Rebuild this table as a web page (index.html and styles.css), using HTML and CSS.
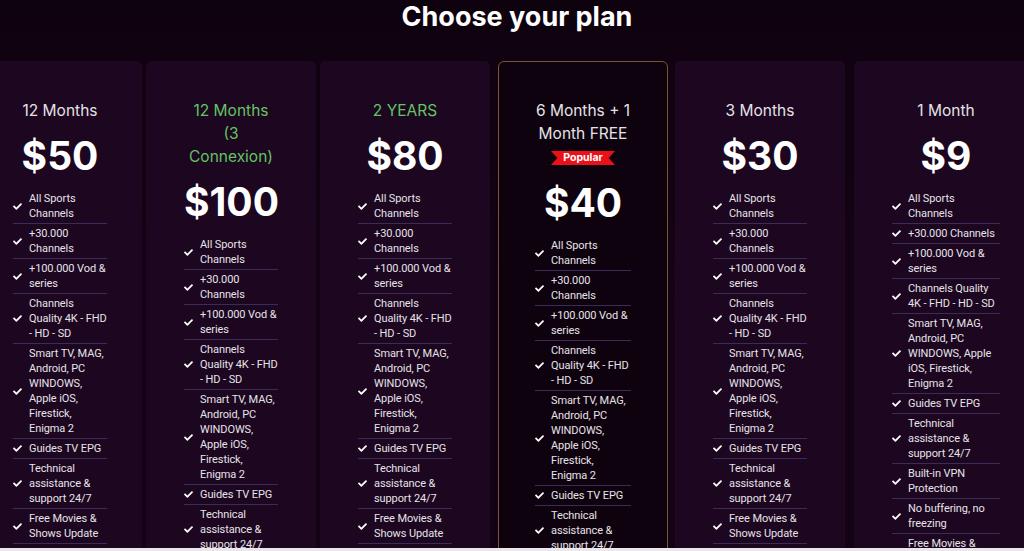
FILE: index.html
```html
<!DOCTYPE html>
<html lang="en">
<head>
<meta charset="utf-8">
<title>Choose your plan</title>
<link rel="stylesheet" href="styles.css">
</head>
<body>
<svg width="0" height="0" class="defs">
  <symbol id="chk" viewBox="0 0 512 512"><path d="M173.9 439.4l-166.4-166.4c-10-10-10-26.2 0-36.2l36.2-36.2c10-10 26.2-10 36.2 0L192 312.7 432.1 72.6c10-10 26.2-10 36.2 0l36.2 36.2c10 10 10 26.2 0 36.2l-294.4 294.4c-10 10-26.2 10-36.2 0z" fill="currentColor"/></symbol>
</svg>
<main class="page">
  <section class="pricing">
    <h1 class="title">Choose your plan</h1>
    <div class="cards">
      <article class="card card--first">
        <h2 class="plan-name">12 Months</h2>
        <div class="price">$50</div>
        <ul class="features">
          <li><svg class="chk"><use href="#chk"/></svg><span>All Sports Channels</span></li>
          <li><svg class="chk"><use href="#chk"/></svg><span>+30.000 Channels</span></li>
          <li><svg class="chk"><use href="#chk"/></svg><span>+100.000 Vod &amp; series</span></li>
          <li><svg class="chk"><use href="#chk"/></svg><span>Channels Quality 4K - FHD - HD - SD</span></li>
          <li><svg class="chk"><use href="#chk"/></svg><span>Smart TV, MAG, Android, PC WINDOWS, Apple iOS, Firestick, Enigma 2</span></li>
          <li><svg class="chk"><use href="#chk"/></svg><span>Guides TV EPG</span></li>
          <li><svg class="chk"><use href="#chk"/></svg><span>Technical assistance &amp; support 24/7</span></li>
          <li><svg class="chk"><use href="#chk"/></svg><span>Free Movies &amp; Shows Update</span></li>
        </ul>
      </article>
      <article class="card">
        <h2 class="plan-name plan-name--green">12 Months (3 Connexion)</h2>
        <div class="price">$100</div>
        <ul class="features">
          <li><svg class="chk"><use href="#chk"/></svg><span>All Sports Channels</span></li>
          <li><svg class="chk"><use href="#chk"/></svg><span>+30.000 Channels</span></li>
          <li><svg class="chk"><use href="#chk"/></svg><span>+100.000 Vod &amp; series</span></li>
          <li><svg class="chk"><use href="#chk"/></svg><span>Channels Quality 4K - FHD - HD - SD</span></li>
          <li><svg class="chk"><use href="#chk"/></svg><span>Smart TV, MAG, Android, PC WINDOWS, Apple iOS, Firestick, Enigma 2</span></li>
          <li><svg class="chk"><use href="#chk"/></svg><span>Guides TV EPG</span></li>
          <li><svg class="chk"><use href="#chk"/></svg><span>Technical assistance &amp; support 24/7</span></li>
          <li><svg class="chk"><use href="#chk"/></svg><span>Free Movies &amp; Shows Update</span></li>
        </ul>
      </article>
      <article class="card">
        <h2 class="plan-name plan-name--green">2 YEARS</h2>
        <div class="price">$80</div>
        <ul class="features">
          <li><svg class="chk"><use href="#chk"/></svg><span>All Sports Channels</span></li>
          <li><svg class="chk"><use href="#chk"/></svg><span>+30.000 Channels</span></li>
          <li><svg class="chk"><use href="#chk"/></svg><span>+100.000 Vod &amp; series</span></li>
          <li><svg class="chk"><use href="#chk"/></svg><span>Channels Quality 4K - FHD - HD - SD</span></li>
          <li><svg class="chk"><use href="#chk"/></svg><span>Smart TV, MAG, Android, PC WINDOWS, Apple iOS, Firestick, Enigma 2</span></li>
          <li><svg class="chk"><use href="#chk"/></svg><span>Guides TV EPG</span></li>
          <li><svg class="chk"><use href="#chk"/></svg><span>Technical assistance &amp; support 24/7</span></li>
          <li><svg class="chk"><use href="#chk"/></svg><span>Free Movies &amp; Shows Update</span></li>
        </ul>
      </article>
      <article class="card card--popular">
        <h2 class="plan-name">6 Months + 1 Month FREE</h2>
        <div class="ribbon">Popular</div>
        <div class="price">$40</div>
        <ul class="features">
          <li><svg class="chk"><use href="#chk"/></svg><span>All Sports Channels</span></li>
          <li><svg class="chk"><use href="#chk"/></svg><span>+30.000 Channels</span></li>
          <li><svg class="chk"><use href="#chk"/></svg><span>+100.000 Vod &amp; series</span></li>
          <li><svg class="chk"><use href="#chk"/></svg><span>Channels Quality 4K - FHD - HD - SD</span></li>
          <li><svg class="chk"><use href="#chk"/></svg><span>Smart TV, MAG, Android, PC WINDOWS, Apple iOS, Firestick, Enigma 2</span></li>
          <li><svg class="chk"><use href="#chk"/></svg><span>Guides TV EPG</span></li>
          <li><svg class="chk"><use href="#chk"/></svg><span>Technical assistance &amp; support 24/7</span></li>
          <li><svg class="chk"><use href="#chk"/></svg><span>Free Movies &amp; Shows Update</span></li>
        </ul>
      </article>
      <article class="card">
        <h2 class="plan-name">3 Months</h2>
        <div class="price">$30</div>
        <ul class="features">
          <li><svg class="chk"><use href="#chk"/></svg><span>All Sports Channels</span></li>
          <li><svg class="chk"><use href="#chk"/></svg><span>+30.000 Channels</span></li>
          <li><svg class="chk"><use href="#chk"/></svg><span>+100.000 Vod &amp; series</span></li>
          <li><svg class="chk"><use href="#chk"/></svg><span>Channels Quality 4K - FHD - HD - SD</span></li>
          <li><svg class="chk"><use href="#chk"/></svg><span>Smart TV, MAG, Android, PC WINDOWS, Apple iOS, Firestick, Enigma 2</span></li>
          <li><svg class="chk"><use href="#chk"/></svg><span>Guides TV EPG</span></li>
          <li><svg class="chk"><use href="#chk"/></svg><span>Technical assistance &amp; support 24/7</span></li>
          <li><svg class="chk"><use href="#chk"/></svg><span>Free Movies &amp; Shows Update</span></li>
        </ul>
      </article>
      <article class="card card--wide">
        <h2 class="plan-name">1 Month</h2>
        <div class="price">$9</div>
        <ul class="features">
          <li><svg class="chk"><use href="#chk"/></svg><span>All Sports Channels</span></li>
          <li><svg class="chk"><use href="#chk"/></svg><span>+30.000 Channels</span></li>
          <li><svg class="chk"><use href="#chk"/></svg><span>+100.000 Vod &amp; series</span></li>
          <li><svg class="chk"><use href="#chk"/></svg><span>Channels Quality 4K - FHD - HD - SD</span></li>
          <li><svg class="chk"><use href="#chk"/></svg><span>Smart TV, MAG, Android, PC WINDOWS, Apple iOS, Firestick, Enigma 2</span></li>
          <li><svg class="chk"><use href="#chk"/></svg><span>Guides TV EPG</span></li>
          <li><svg class="chk"><use href="#chk"/></svg><span>Technical assistance &amp; support 24/7</span></li>
          <li><svg class="chk"><use href="#chk"/></svg><span>Built-in VPN Protection</span></li>
          <li><svg class="chk"><use href="#chk"/></svg><span>No buffering, no freezing</span></li>
          <li><svg class="chk"><use href="#chk"/></svg><span>Free Movies &amp; Shows Update</span></li>
        </ul>
      </article>
    </div>
  </section>
  <div class="next-section"></div>
</main>
</body>
</html>
```
FILE: styles.css
```css
* { box-sizing: border-box; }
html, body { margin: 0; padding: 0; }
body {
  background: #120313;
  color: #fff;
  font-family: Inter, "Noto Sans", sans-serif;
  overflow: hidden;
}
.defs { position: absolute; width: 0; height: 0; }
.page {
  height: 551px;
  display: flex;
  flex-direction: column;
}
.pricing {
  height: 548px;
  overflow: hidden;
  background: linear-gradient(#0f020f, #140315 60%);
}
.title {
  margin: 0;
  padding-left: 10px;
  font-size: 27px;
  line-height: 34px;
  font-weight: 700;
  text-align: center;
  color: #fff;
}
.cards {
  display: flex;
  gap: 4px;
  margin: 27px 0 0 -25px;
  height: 600px;
}
.card {
  flex: none;
  width: 170px;
  padding: 38px 38px 0;
  background: #1c0620;
  border-radius: 5px;
  text-align: center;
}
.card--first {
  width: 167px;
  padding-right: 35px;
}
.card--popular {
  background: #0f020f;
  border: 1px solid #7d5434;
  border-radius: 6px;
  padding: 37px 35px 0;
  margin: 0 3px 0 4px;
}
.card--popular .features {
  margin-left: 1px;
  margin-right: 1px;
}
.card--wide {
  width: 184px;
  margin-left: 5px;
}
.plan-name {
  margin: 0;
  font-size: 15.5px;
  line-height: 23px;
  font-weight: 400;
  color: #e4e2e6;
}
.plan-name--green { color: #62c463; }
.ribbon {
  display: inline-block;
  margin: 4px 0 14px;
  width: 64px;
  height: 14px;
  line-height: 14px;
  font-size: 10.5px;
  font-weight: 700;
  color: #fff;
  background: #ec1118;
  clip-path: polygon(0 0, 100% 0, 90% 50%, 100% 100%, 0 100%, 10% 50%);
}
.price {
  margin-top: 10px;
  font-size: 39px;
  line-height: 48px;
  font-weight: 700;
  color: #fff;
}
.card--popular .price {
  margin-top: 0;
}
.features {
  list-style: none;
  margin: 9px 0 0;
  padding: 0;
  text-align: left;
}
.features li {
  display: flex;
  align-items: center;
  gap: 7px;
  padding: 2px 0;
  border-bottom: 1px solid #3a2b58;
  font-family: Roboto, "Noto Sans", sans-serif;
  font-size: 11px;
  line-height: 15px;
  color: #e6e3e8;
  letter-spacing: -0.1px;
}
.chk {
  flex: none;
  width: 9px;
  height: 9px;
  color: #fff;
}
.next-section {
  height: 3px;
  background: #ebe8ec;
}
```
